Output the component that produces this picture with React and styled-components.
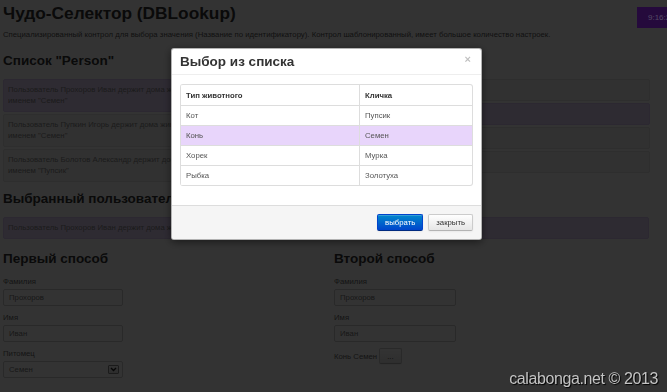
import React from "react";
import styled, { createGlobalStyle } from "styled-components";

const Global = createGlobalStyle`
  html, body {
    margin: 0;
    padding: 0;
    background: #fff;
    overflow: hidden;
  }
  body {
    font-family: "Liberation Sans", Arial, sans-serif;
    color: #333;
    font-size: 7.75px;
    line-height: 11px;
  }
`;

const Page = styled.div`
  position: relative;
  width: 667px;
  height: 392px;
  box-sizing: border-box;
  padding: 0 18px 0 3px;
  overflow: hidden;
`;

const Header = styled.div`
  display: flex;
  justify-content: space-between;
  align-items: flex-start;
  margin-right: -18px;
  height: 28px;
`;

const Title = styled.h1`
  margin: 3px 0 0;
  font-size: 17.3px;
  line-height: 20px;
  font-weight: bold;
  color: #333;
`;

const Clock = styled.div`
  position: relative;
  z-index: 20;
  margin-top: 7px;
  width: 30px;
  height: 21px;
  box-sizing: border-box;
  padding-left: 11px;
  background: #250a3c;
  color: #554a66;
  font-size: 8px;
  line-height: 21px;
  white-space: nowrap;
  overflow: hidden;
`;

const Lead = styled.p`
  margin: 0.5px 0 0;
  color: #555;
`;

const Heading = styled.h3`
  margin: ${(p) => p.$top ?? 9}px 0 ${(p) => p.$bottom ?? 10}px;
  font-size: 13.5px;
  line-height: 16px;
  font-weight: bold;
  color: #333;
`;

const Columns = styled.div`
  display: grid;
  grid-template-columns: 316px 316px;
  column-gap: 15px;
  align-items: start;
`;

const List = styled.div`
  display: flex;
  flex-direction: column;
  gap: 1.5px;
`;

const Item = styled.div`
  padding: 4.75px 4px;
  border: 1px solid ${(p) => (p.$active ? "#d9c6f2" : "#e3e3e3")};
  border-radius: 2px;
  background: ${(p) => (p.$active ? "#e6d6fb" : "#f5f5f5")};
  color: #888;
  white-space: nowrap;
  overflow: hidden;
`;

const Field = styled.div`
  display: flex;
  flex-direction: column;
  align-items: flex-start;
`;

const Label = styled.label`
  margin-top: ${(p) => p.$top ?? 5.5}px;
  color: #666;
`;

const Input = styled.div`
  margin-top: 2.5px;
  width: ${(p) => p.$w || 120}px;
  height: 17px;
  box-sizing: border-box;
  padding: 0 5px;
  border: 1px solid #ccc;
  border-radius: 2px;
  background: #fff;
  color: #777;
  line-height: 15px;
  display: flex;
  align-items: center;
  justify-content: space-between;
`;

const SelectArrow = styled.span`
  width: 11px;
  height: 9px;
  box-sizing: border-box;
  border: 1px solid #888;
  border-radius: 1px;
  background: linear-gradient(#fafafa, #ddd);
  display: flex;
  align-items: center;
  justify-content: center;
  margin-right: -2px;
`;

const PetRow = styled.div`
  margin-top: 6px;
  display: flex;
  align-items: center;
  gap: 2px;
  color: #666;
`;

const Btn = styled.button`
  font-family: inherit;
  font-size: 7.75px;
  line-height: 11px;
  height: ${(p) => p.$h || 17}px;
  padding: 0 ${(p) => p.$px || 7}px;
  border-radius: 2px;
  cursor: pointer;
  border: 1px solid ${(p) => (p.$primary ? "#0044cc" : "#ccc")};
  border-bottom-color: ${(p) => (p.$primary ? "#002a80" : "#b3b3b3")};
  color: ${(p) => (p.$primary ? "#fff" : "#333")};
  background: ${(p) =>
    p.$primary
      ? "linear-gradient(#0088cc, #0044cc)"
      : "linear-gradient(#ffffff, #e6e6e6)"};
  box-shadow: inset 0 1px 0 rgba(255, 255, 255, 0.2),
    0 1px 2px rgba(0, 0, 0, 0.05);
`;

const Backdrop = styled.div`
  position: fixed;
  inset: 0;
  background: rgba(0, 0, 0, 0.8);
  z-index: 10;
`;

const Modal = styled.div`
  position: fixed;
  left: 171px;
  top: 48px;
  width: 309px;
  z-index: 30;
  background: #fff;
  border: 1px solid rgba(0, 0, 0, 0.3);
  border-radius: 3px;
  box-shadow: 0 2px 8px rgba(0, 0, 0, 0.5);
  overflow: hidden;
`;

const ModalHead = styled.div`
  display: flex;
  justify-content: space-between;
  align-items: center;
  height: 25px;
  padding: 0 10px 0 8px;
  border-bottom: 1px solid #eee;
`;

const ModalTitle = styled.h3`
  margin: 1px 0 0;
  font-size: 13.5px;
  line-height: 16px;
  font-weight: bold;
  color: #333;
`;

const Close = styled.span`
  color: #000;
  opacity: 0.25;
  font-size: 11px;
  font-weight: bold;
  line-height: 11px;
  margin-top: -4px;
`;

const ModalBody = styled.div`
  padding: 9px 8px 19px;
`;

const Table = styled.table`
  width: 100%;
  border-collapse: separate;
  border-spacing: 0;
  border: 1px solid #ddd;
  border-left: 0;
  border-radius: 3px;
  overflow: hidden;
`;

const Th = styled.th`
  text-align: left;
  font-weight: bold;
  color: #333;
  height: 20px;
  padding: 0 5px;
  border-left: 1px solid #ddd;
  width: ${(p) => p.$w || "auto"};
`;

const Td = styled.td`
  height: 19px;
  padding: 0 5px;
  color: #555;
  border-left: 1px solid #ddd;
  border-top: 1px solid #ddd;
  background: ${(p) => (p.$active ? "#e8d5fb" : "transparent")};
`;

const ModalFoot = styled.div`
  display: flex;
  justify-content: flex-end;
  gap: 5px;
  padding: 8px 8px;
  background: #f5f5f5;
  border-top: 1px solid #ddd;
`;

const Watermark = styled.div`
  position: absolute;
  right: 9px;
  bottom: 4px;
  z-index: 40;
  font-size: 16px;
  line-height: 18px;
  letter-spacing: -0.4px;
  color: #c4c4c4;
  text-shadow: 1px 1px 1px #000;
`;

const Chevron = () => (
  <svg width="7" height="5" viewBox="0 0 7 5">
    <path d="M1 1 L3.5 3.5 L6 1" fill="none" stroke="#222" strokeWidth="1.4" />
  </svg>
);

const persons = [
  { text: "Пользователь Прохоров Иван держит дома животное Конь с", name: "Семен", active: true },
  { text: "Пользователь Пупкин Игорь держит дома животное Конь с", name: "Семен" },
  { text: "Пользователь Болотов Александр держит дома животное Кот с", name: "Пупсик" },
];

const pets = [
  { type: "Кот", name: "Пупсик" },
  { type: "Конь", name: "Семен", active: true },
  { type: "Хорек", name: "Мурка" },
  { type: "Рыбка", name: "Золотуха" },
];

export default function App() {
  return (
    <>
      <Global />
      <Page>
        <Header>
          <Title>Чудо-Селектор (DBLookup)</Title>
          <Clock>9:16:24</Clock>
        </Header>
        <Lead>
          Специализированный контрол для выбора значения (Название по
          идентификатору). Контрол шаблонированный, имеет большое количество
          настроек.
        </Lead>

        <Columns>
          <div>
            <Heading $top={13}>Список "Person"</Heading>
            <List>
              {persons.map((p) => (
                <Item key={p.text} $active={p.active}>
                  {p.text}
                  <br />
                  именем "{p.name}"
                </Item>
              ))}
            </List>
          </div>
          <div>
            <Heading $top={13}>Список "Pet"</Heading>
            <List>
              {pets.map((p) => (
                <Item key={p.type} $active={p.active}>
                  {p.type} "{p.name}"
                </Item>
              ))}
            </List>
          </div>
        </Columns>

        <Heading $top={8.5}>Выбранный пользователь</Heading>
        <Item $active>
          Пользователь Прохоров Иван держит дома животное Конь с именем "Семен"
        </Item>

        <Columns>
          <Field>
            <Heading $top={12} $bottom={8.5}>Первый способ</Heading>
            <Label $top={0}>Фамилия</Label>
            <Input>Прохоров</Input>
            <Label>Имя</Label>
            <Input>Иван</Input>
            <Label>Питомец</Label>
            <Input>
              Семен
              <SelectArrow>
                <Chevron />
              </SelectArrow>
            </Input>
          </Field>
          <Field>
            <Heading $top={12} $bottom={8.5}>Второй способ</Heading>
            <Label $top={0}>Фамилия</Label>
            <Input $w={122}>Прохоров</Input>
            <Label>Имя</Label>
            <Input $w={122}>Иван</Input>
            <PetRow>
              Конь Семен
              <Btn $h={16} $px={7}>...</Btn>
            </PetRow>
          </Field>
        </Columns>

        <Backdrop />

        <Modal>
          <ModalHead>
            <ModalTitle>Выбор из списка</ModalTitle>
            <Close>×</Close>
          </ModalHead>
          <ModalBody>
            <Table>
              <thead>
                <tr>
                  <Th $w="168px">Тип животного</Th>
                  <Th>Кличка</Th>
                </tr>
              </thead>
              <tbody>
                {pets.map((p) => (
                  <tr key={p.type}>
                    <Td $active={p.active}>{p.type}</Td>
                    <Td $active={p.active}>{p.name}</Td>
                  </tr>
                ))}
              </tbody>
            </Table>
          </ModalBody>
          <ModalFoot>
            <Btn $primary>выбрать</Btn>
            <Btn>закрыть</Btn>
          </ModalFoot>
        </Modal>

        <Watermark>calabonga.net © 2013</Watermark>
      </Page>
    </>
  );
}
